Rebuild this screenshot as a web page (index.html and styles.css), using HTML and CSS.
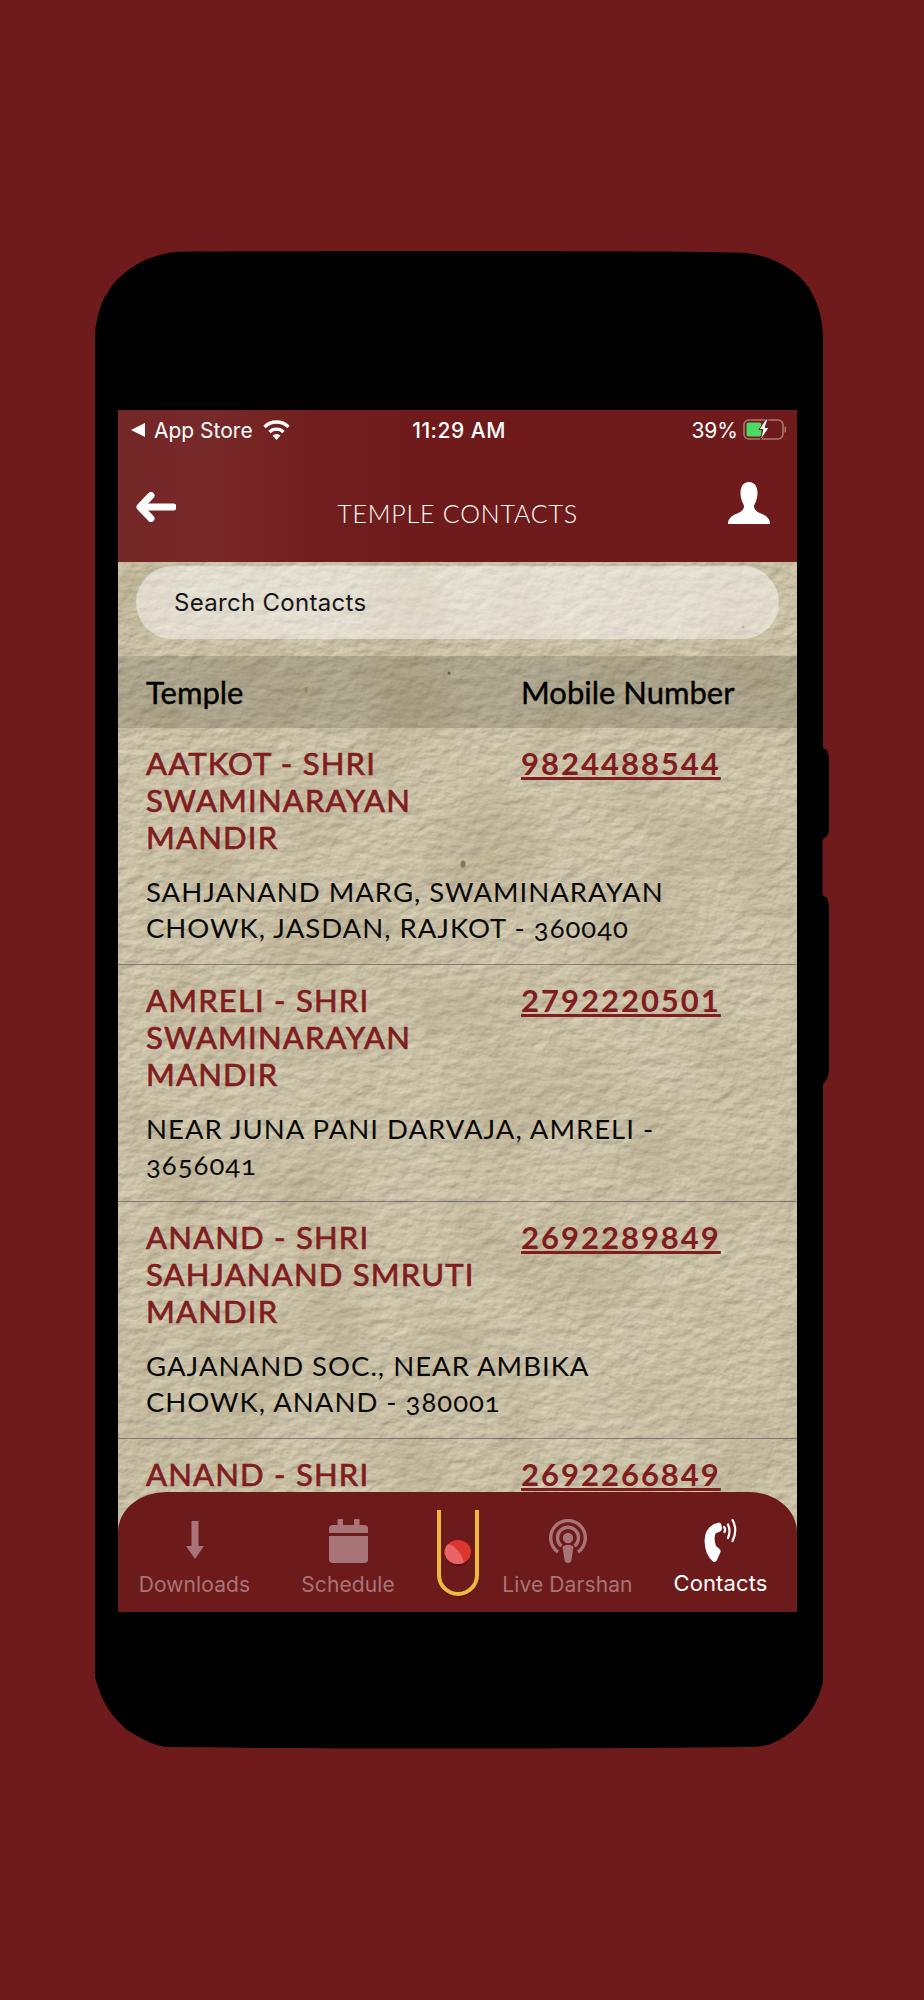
FILE: index.html
```html
<!DOCTYPE html>
<html lang="en">
  <head>
    <meta charset="UTF-8" />
    <meta name="viewport" content="width=device-width, initial-scale=1.0" />
    <title>Temple Contacts</title>
    <link rel="stylesheet" href="styles.css">
  </head>
  <body>
    <div class="phone">
      <div class="screen">
        <div class="topbar">
          <div class="status">
            <div class="status-left">
              <svg class="back-tri" width="15" height="14" viewBox="0 0 15 14"><path d="M14 0V14L0 7Z" fill="#fff"/></svg>
              <span>App Store</span>
              <svg class="wifi" width="27" height="20" viewBox="0 0 27 20" fill="none" stroke="#fff" stroke-width="3.4"><path d="M1.5 7A17 17 0 0 1 25.5 7"/><path d="M6.5 12A10 10 0 0 1 20.5 12"/><path d="M13.5 20L9.5 15.5A6 6 0 0 1 17.5 15.5Z" fill="#fff" stroke="none"/></svg>
            </div>
            <div class="status-time">11:29 AM</div>
            <div class="status-right">
              <span>39%</span>
              <svg width="44" height="25" viewBox="0 0 44 25">
                <rect x="1" y="2" width="39" height="19" rx="5" fill="none" stroke="#fff" stroke-opacity=".4" stroke-width="1.6"/>
                <rect x="3.5" y="4.5" width="15" height="14" rx="2" fill="#4cd964"/>
                <rect x="41.5" y="8.5" width="1.6" height="6" rx="1" fill="#fff" fill-opacity=".4"/>
                <path d="M23 1L16 11.500H20L17 23L26 9.500H22L25 1Z" fill="#fff" stroke="#701b1b" stroke-width="1"/>
              </svg>
            </div>
          </div>
          <div class="nav">
            <svg class="nav-back" width="40" height="30" viewBox="0 0 40 30" fill="none" stroke="#fff" stroke-width="7" stroke-linecap="round" stroke-linejoin="round"><path d="M37 15H6"/><path d="M15 3.500L4 15L15 26.500"/></svg>
            <div class="nav-title">TEMPLE CONTACTS</div>
            <svg class="nav-user" width="42" height="42" viewBox="0 0 42 42"><path d="M21 0C15 0 12.500 5 12.500 11C12.500 17 15 21 16 24C16 28 13 30 8 32C3 34 0 37 0 42H42C42 37 39 34 34 32C29 30 26 28 26 24C27 21 29.500 17 29.500 11C29.500 5 27 0 21 0Z" fill="#fff"/></svg>
          </div>
        </div>

        <div class="content">
          <svg class="paper" width="680" height="1060">
            <filter id="grain" x="0" y="0" width="100%" height="100%" color-interpolation-filters="sRGB">
              <feTurbulence type="fractalNoise" baseFrequency=".07 .1" numOctaves="4" seed="11" result="n"/>
              <feDiffuseLighting in="n" lighting-color="#c8bfa6" surfaceScale=".9" diffuseConstant="1.16" result="lit">
                <feDistantLight azimuth="60" elevation="60"/>
              </feDiffuseLighting>
              <feTurbulence type="fractalNoise" baseFrequency=".012" numOctaves="2" seed="4"/>
              <feColorMatrix type="matrix" values="0 0 0 0 .6  0 0 0 0 .52  0 0 0 0 .36  .5 0 0 0 -.2" result="blot"/>
              <feMerge>
                <feMergeNode in="lit"/>
                <feMergeNode in="blot"/>
              </feMerge>
            </filter>
            <rect width="680" height="1060" filter="url(#grain)"/>
            <ellipse cx="331" cy="111" rx="1.500" ry="1.500" fill="#6d5a45"/>
            <ellipse cx="345" cy="302" rx="2.500" ry="3.500" fill="#8a7750"/>
            <ellipse cx="625" cy="65" rx="1.500" ry="1.500" fill="#7e7058"/>
            <ellipse cx="188" cy="128" rx="1.500" ry="3" fill="#a89a70"/>
          </svg>

          <div class="search">Search Contacts</div>

          <div class="table-head">
            <div>Temple</div>
            <div>Mobile Number</div>
          </div>

          <div class="row">
            <div class="row-top">
              <div class="row-name">AATKOT - SHRI SWAMINARAYAN MANDIR</div>
              <a class="row-tel">9824488544</a>
            </div>
            <div class="row-addr">SAHJANAND MARG, SWAMINARAYAN CHOWK, JASDAN, RAJKOT - 360040</div>
          </div>
          <div class="row">
            <div class="row-top">
              <div class="row-name">AMRELI - SHRI SWAMINARAYAN MANDIR</div>
              <a class="row-tel">2792220501</a>
            </div>
            <div class="row-addr">NEAR JUNA PANI DARVAJA, AMRELI - 3656041</div>
          </div>
          <div class="row">
            <div class="row-top">
              <div class="row-name">ANAND - SHRI SAHJANAND SMRUTI MANDIR</div>
              <a class="row-tel">2692289849</a>
            </div>
            <div class="row-addr">GAJANAND SOC., NEAR AMBIKA CHOWK, ANAND - 380001</div>
          </div>
          <div class="row">
            <div class="row-top">
              <div class="row-name">ANAND - SHRI</div>
              <a class="row-tel">2692266849</a>
            </div>
          </div>
        </div>

        <div class="tabbar">
          <div class="tab">
            <div class="tab-icon">
              <svg width="30" height="40" viewBox="0 0 30 40"><path d="M11.500 0H18.500V25H24L15 38L6 25H11.500Z" fill="#a97478"/></svg>
            </div>
            <div class="tab-label">Downloads</div>
          </div>
          <div class="tab">
            <div class="tab-icon">
              <svg width="39" height="44" viewBox="0 0 39 44" fill="#a97478">
                <rect x="8.500" width="5.500" height="8" rx="1"/>
                <rect x="25" width="5.500" height="8" rx="1"/>
                <path d="M4 6H35A4 4 0 0 1 39 10V14H0V10A4 4 0 0 1 4 6Z"/>
                <path d="M0 17H39V40A4 4 0 0 1 35 44H4A4 4 0 0 1 0 40Z"/>
              </svg>
            </div>
            <div class="tab-label">Schedule</div>
          </div>
          <div class="tab-logo">
            <svg width="46" height="92" viewBox="0 0 46 92">
              <path d="M4 0V65A19 19 0 0 0 42 65V0" fill="none" stroke="#4a1010" stroke-opacity=".5" stroke-width="4" transform="translate(0 1.500)"/>
              <path d="M4 0V65A19 19 0 0 0 42 65V0" fill="none" stroke="#efb93c" stroke-width="4"/>
              <ellipse cx="23" cy="44" rx="13" ry="12" fill="#4a1010" fill-opacity=".5"/>
              <ellipse cx="23" cy="42" rx="13" ry="12" fill="#dc372f"/>
              <path d="M13 34A13 12 0 0 0 23 54C27 54 29 52.500 29 52.500C27 44 21 36 13 34Z" fill="#e96464"/>
            </svg>
          </div>
          <div class="tab">
            <div class="tab-icon">
              <svg width="38" height="44" viewBox="0 0 38 44" fill="none" stroke="#a97478" stroke-width="3.400">
                <path d="M9 33A17.300 17.300 0 1 1 29 33"/>
                <path d="M12.500 27A10.500 10.500 0 1 1 25.500 27"/>
                <circle cx="19" cy="19" r="5.200" fill="#a97478" stroke="none"/>
                <path d="M13.500 27.500Q19 24 24.500 27.500L22.500 41Q22 44 19 44Q16 44 15.500 41Z" fill="#a97478" stroke="none"/>
              </svg>
            </div>
            <div class="tab-label">Live Darshan</div>
          </div>
          <div class="tab tab-on">
            <div class="tab-icon">
              <svg width="34" height="44" viewBox="0 0 34 44">
                <path d="M10 5L15 3.500Q17 3.500 17.500 6L18 10Q18 12 15 13L11.500 14.500Q9.500 20 12 27L15.500 30Q17 31 16.500 33L13 41Q11.500 44 9 42.500Q1 36 .5 22Q.5 10 10 5Z" fill="#fff"/>
                <g fill="none" stroke="#fff" stroke-width="2.200" stroke-linecap="round">
                  <path d="M20 8Q22 10 20.500 13"/>
                  <path d="M24 5.500Q27 12 24 19"/>
                  <path d="M28.500 1Q34 11 28.500 22"/>
                </g>
              </svg>
            </div>
            <div class="tab-label">Contacts</div>
          </div>
        </div>
      </div>
    </div>
  </body>
</html>
```

FILE: styles.css
```css
* {
  margin: 0;
  padding: 0;
  box-sizing: border-box;
}
body {
  height: 2000px;
  padding: 250px 0 0 95px;
  background: #701b1b;
  font-family: "Lato", "Liberation Sans", sans-serif;
  overflow: hidden;
}
/* body outline with the side buttons */
.phone {
  width: 734px;
  height: 1499px;
  padding: 160px 32px 137px 23px;
  background: #000;
  clip-path: path("M80 2C85 1 600 0 650 3C672 5 690 14 705 27C718 40 727 60 728 85L728 498L732 500Q734 505 734 510L734 578Q734 586 729 588L727.500 590L727.500 645L732 648Q734 652 734 660L734 820Q733 830 728 834L728 1432C722 1458 705 1480 680 1492C670 1497 660 1497 650 1497C500 1499 200 1499 75 1497C60 1497 50 1490 35 1482C28 1477 25 1473 20 1468C10 1456 5 1445 0 1427L0 85C1 70 6 50 12.500 43C18 32 30 20 50 10C60 6 70 3 80 2Z");
}
.screen {
  position: relative;
  height: 1202px;
  display: flex;
  flex-direction: column;
  overflow: hidden;
  background: #c0b79b;
}

/* top bar */
.topbar {
  flex: none;
  height: 152px;
  color: #fff;
  background: linear-gradient(90deg, #742727 0, #782929 14%, #721e1e 28%, #701b1b 45%);
}
.status {
  display: grid;
  grid-template-columns: 1fr auto 1fr;
  align-items: center;
  height: 40px;
  padding: 0 10px 0 13px;
  font-family: "Inter", sans-serif;
  font-size: 21px;
}
.status-left {
  display: flex;
  align-items: center;
}
.back-tri {
  margin-right: 8px;
}
.wifi {
  margin-left: 10px;
}
.status-time {
  font-weight: 500;
  letter-spacing: 0.5px;
}
.status-right {
  display: flex;
  align-items: center;
  justify-content: flex-end;
  gap: 5px;
}
.nav {
  display: grid;
  grid-template-columns: 1fr auto 1fr;
  align-items: center;
  height: 112px;
  padding: 0 18px;
}
.nav-back {
  margin-top: 2px;
}
.nav-user {
  justify-self: end;
  margin: -6px 9px 0 0;
}
.nav-title {
  font-size: 25px;
  font-weight: 300;
  letter-spacing: 0.8px;
  margin-top: 14px;
}

/* list */
.content {
  position: relative;
  flex: 1;
  overflow: hidden;
}
.paper {
  position: absolute;
  top: 0;
  left: 0;
}
.search {
  position: relative;
  height: 73px;
  margin: 4px 18px 17px 18px;
  padding-left: 38px;
  line-height: 73px;
  font-family: "Inter", sans-serif;
  font-size: 24px;
  letter-spacing: 0.3px;
  color: #151515;
  background: rgba(255, 255, 255, 0.47);
  border-radius: 37px;
}
.table-head {
  position: relative;
  display: grid;
  grid-template-columns: 375px 1fr;
  align-items: center;
  height: 72px;
  padding-left: 28px;
  font-size: 31px;
  -webkit-text-stroke: 0.4px #000;
  color: #000;
  background: rgba(85, 78, 58, 0.24);
}
.row {
  position: relative;
  padding: 17px 0 18px 28px;
  border-bottom: 1px solid rgba(70, 70, 70, 0.55);
}
.row:last-child {
  border-bottom: 0;
}
.row-top {
  display: grid;
  grid-template-columns: 375px 1fr;
}
.row-name {
  padding-right: 25px;
  font-size: 31px;
  letter-spacing: 1.200px;
  line-height: 37px;
  -webkit-text-stroke: 0.7px #7f1d1f;
  color: #7f1d1f;
}
.row-tel {
  font-size: 31px;
  font-weight: 700;
  letter-spacing: 2px;
  line-height: 37px;
  color: #7f1d1f;
  text-decoration: underline;
}
.row-addr {
  width: 540px;
  margin-top: 18px;
  font-size: 27.500px;
  letter-spacing: 1px;
  line-height: 36px;
  color: #0a0a0a;
  font-variant-numeric: oldstyle-nums;
}

/* bottom tabs */
.tabbar {
  position: absolute;
  left: 0;
  right: 0;
  bottom: 0;
  display: grid;
  grid-template-columns: 153px 154px 66px 153px 153px;
  height: 120px;
  padding-top: 26px;
  background: #6c1a1a;
  border-radius: 48px 48px 0 0 / 40px 40px 0 0;
}
.tab {
  display: flex;
  flex-direction: column;
  align-items: center;
  font-family: "Inter", sans-serif;
  font-size: 21px;
  letter-spacing: 0.1px;
  color: #a97478;
}
.tab-icon {
  display: flex;
  align-items: center;
  justify-content: center;
  height: 46px;
}
.tab-label {
  margin-top: 9px;
  line-height: 24px;
  white-space: nowrap;
}
.tab-on {
  font-size: 22px;
  color: #fff;
}
.tab-on .tab-label {
  margin-top: 7px;
}
.tab-logo {
  display: flex;
  justify-content: center;
  margin-top: -8px;
}
```
